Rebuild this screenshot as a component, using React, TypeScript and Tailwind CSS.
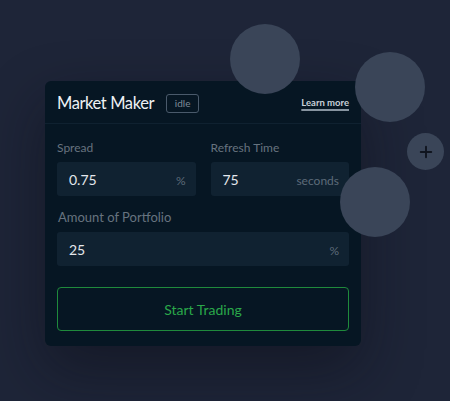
import { Plus } from 'lucide-react';

function Field({ label, value, unit, labelClass = 'text-[12px]', className = '' }: { label: string; value: string; unit: string; labelClass?: string; className?: string }) {
  return (
    <div className={`flex flex-col gap-[7px] ${className}`}>
      <label className={`${labelClass} leading-[15px] text-[#66737f]`}>{label}</label>
      <div className="flex h-[34px] items-center justify-between rounded-[3px] bg-[#102231] pl-3 pr-[10px]">
        <span className="text-[14px] text-[#e3e7ec]">{value}</span>
        <span className="pt-[3px] text-[12px] text-[#5d6b79]">{unit}</span>
      </div>
    </div>
  );
}

export default function App() {
  return (
    <div className="relative h-[401px] w-[450px] overflow-hidden bg-[#1e2538] font-['Lato',sans-serif]">
      <div className="pl-[45px] pt-[81px]">
        <div className="w-[316px] rounded-[6px] bg-[#061623] shadow-[0_24px_60px_rgba(10,12,20,0.45)]">
          {/* header */}
          <div className="flex h-[43px] items-center justify-between border-b border-[#0f2130] px-3 pt-[2px]">
            <div className="flex items-center gap-3">
              <h1 className="text-[16.5px] tracking-[-0.4px] text-[#eef1f4]">Market Maker</h1>
              <span className="flex h-[19px] w-[33px] items-center justify-center rounded-[3px] border border-[#4a5a6b] text-[10px] text-[#7f8b98]">
                idle
              </span>
            </div>
            <a className="text-[9.5px] font-bold text-[#c9d0d8] underline decoration-[#8794a0] decoration-[1.5px] underline-offset-[3px]">
              Learn more
            </a>
          </div>

          {/* body */}
          <div className="px-3 pb-[15px] pt-4">
            <div className="grid grid-cols-2 gap-[15px]">
              <Field label="Spread" value="0.75" unit="%" />
              <Field label="Refresh Time" value="75" unit="seconds" />
            </div>
            <Field label="Amount of Portfolio" value="25" unit="%" labelClass="text-[13px] pl-px" className="mt-[14px]" />
            <button className="mt-[21px] flex h-[44px] w-full items-center justify-center rounded-[4px] border border-[#1f8a3c] text-[14px] text-[#2aa84a]">
              Start Trading
            </button>
          </div>
        </div>
      </div>

      {/* floating circles */}
      <div className="absolute left-[230px] top-[24px] h-[70px] w-[70px] rounded-full bg-[#3a4558]" />
      <div className="absolute left-[355px] top-[52px] h-[70px] w-[70px] rounded-full bg-[#3a4558]" />
      <div className="absolute left-[407px] top-[133px] flex h-[37px] w-[37px] items-center justify-center rounded-full bg-[#3a4558]">
        <Plus className="h-[18px] w-[18px] text-[#10151f]" strokeWidth={2.5} />
      </div>
      <div className="absolute left-[340px] top-[167px] h-[70px] w-[70px] rounded-full bg-[#3a4558]" />
    </div>
  );
}
